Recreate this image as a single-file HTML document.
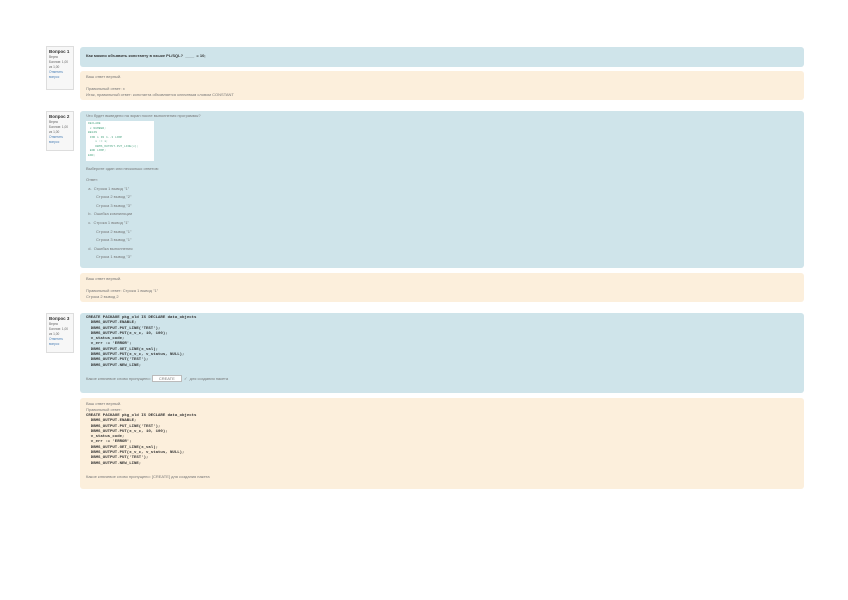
<!DOCTYPE html>
<html><head><style>
body{margin:0;width:848px;height:600px;background:#fff;position:relative;overflow:hidden;font-family:"Liberation Sans",sans-serif;color:#555}
.a{position:absolute}
.b{background:#cfe4ea;border-radius:3px}
.o{background:#fcefdc;border-radius:3px}
.i{background:#f7f7f7;border:1px solid #ddd;font-size:3.2px;line-height:5px;padding:2px;box-sizing:border-box;color:#666;white-space:nowrap}
.i b{font-size:4.5px;color:#333}
.t{font-size:4px;line-height:6px;white-space:pre;color:#777}
.m{font-family:"Liberation Mono",monospace;font-size:4px;line-height:5.3px;white-space:pre;color:#333;font-weight:bold}
</style></head><body>
<div class="a i" style="left:46px;top:46px;width:28px;height:44px"><b>Вопрос 1</b><br>Верно<br>Баллов: 1,00<br>из 1,00<br><span style="color:#4a7fb5">Отметить<br>вопрос</span></div>
<div class="a b" style="left:80px;top:47px;width:724px;height:20px"></div>
<div class="a t" style="left:86px;top:53px;color:#333;font-weight:bold">Как можно объявить константу в языке PL/SQL?  ____  = 10;</div>
<div class="a o" style="left:80px;top:71px;width:724px;height:29px"></div>
<div class="a t" style="left:86px;top:74px">Ваш ответ верный.

Правильный ответ: x
Итак, правильный ответ: константа объявляется ключевым словом CONSTANT</div>

<div class="a i" style="left:46px;top:111px;width:28px;height:40px"><b>Вопрос 2</b><br>Верно<br>Баллов: 1,00<br>из 1,00<br><span style="color:#4a7fb5">Отметить<br>вопрос</span></div>
<div class="a b" style="left:80px;top:111px;width:724px;height:157px"></div>
<div class="a t" style="left:86px;top:113px">Что будет выведено на экран после выполнения программы?</div>
<div class="a" style="left:86px;top:121px;width:68px;height:40px;background:#fff"></div>
<div class="a m" style="left:88px;top:122px;font-weight:normal;font-size:3px;line-height:4.5px;color:#5a8">DECLARE
 x NUMBER;
BEGIN
 FOR i IN 1..3 LOOP
    x := i;
    DBMS_OUTPUT.PUT_LINE(x);
 END LOOP;
END;</div>
<div class="a t" style="left:86px;top:166px">Выберите один или несколько ответов:</div>
<div class="a t" style="left:86px;top:176px;line-height:8.6px">Ответ:
  a.  Строка 1 вывод "1"
         Строка 2 вывод "2"
         Строка 3 вывод "3"
  b.  Ошибка компиляции
  c.  Строка 1 вывод "1"
         Строка 2 вывод "1"
         Строка 3 вывод "1"
  d.  Ошибка выполнения
         Строка 1 вывод "3"</div>
<div class="a o" style="left:80px;top:273px;width:724px;height:29px"></div>
<div class="a t" style="left:86px;top:276px">Ваш ответ верный.

Правильный ответ: Строка 1 вывод "1"
Строка 2 вывод 2</div>

<div class="a i" style="left:46px;top:313px;width:28px;height:40px"><b>Вопрос 3</b><br>Верно<br>Баллов: 1,00<br>из 1,00<br><span style="color:#4a7fb5">Отметить<br>вопрос</span></div>
<div class="a b" style="left:80px;top:313px;width:724px;height:80px"></div>
<div class="a m" style="left:86px;top:316px">CREATE PACKAGE pkg_old IS DECLARE data_objects
  DBMS_OUTPUT.ENABLE;
  DBMS_OUTPUT.PUT_LINE('TEST');
  DBMS_OUTPUT.PUT(x_v_c, 10, 100);
  v_status_code;
  v_err := 'ERROR';
  DBMS_OUTPUT.GET_LINE(x_val);
  DBMS_OUTPUT.PUT(x_v_c, v_status, NULL);
  DBMS_OUTPUT.PUT('TEST');
  DBMS_OUTPUT.NEW_LINE;</div>
<div class="a t" style="left:86px;top:376px">Какое ключевое слово пропущено: <span style="background:#fff;border:1px solid #bbb;padding:0 6px">CREATE</span>  ✓  для создания пакета</div>
<div class="a o" style="left:80px;top:398px;width:724px;height:91px"></div>
<div class="a t" style="left:86px;top:401px">Ваш ответ верный.
Правильный ответ:</div>
<div class="a m" style="left:86px;top:414px">CREATE PACKAGE pkg_old IS DECLARE data_objects
  DBMS_OUTPUT.ENABLE;
  DBMS_OUTPUT.PUT_LINE('TEST');
  DBMS_OUTPUT.PUT(x_v_c, 10, 100);
  v_status_code;
  v_err := 'ERROR';
  DBMS_OUTPUT.GET_LINE(x_val);
  DBMS_OUTPUT.PUT(x_v_c, v_status, NULL);
  DBMS_OUTPUT.PUT('TEST');
  DBMS_OUTPUT.NEW_LINE;</div>
<div class="a t" style="left:86px;top:474px">Какое ключевое слово пропущено: [CREATE] для создания пакета</div>
</body></html>
